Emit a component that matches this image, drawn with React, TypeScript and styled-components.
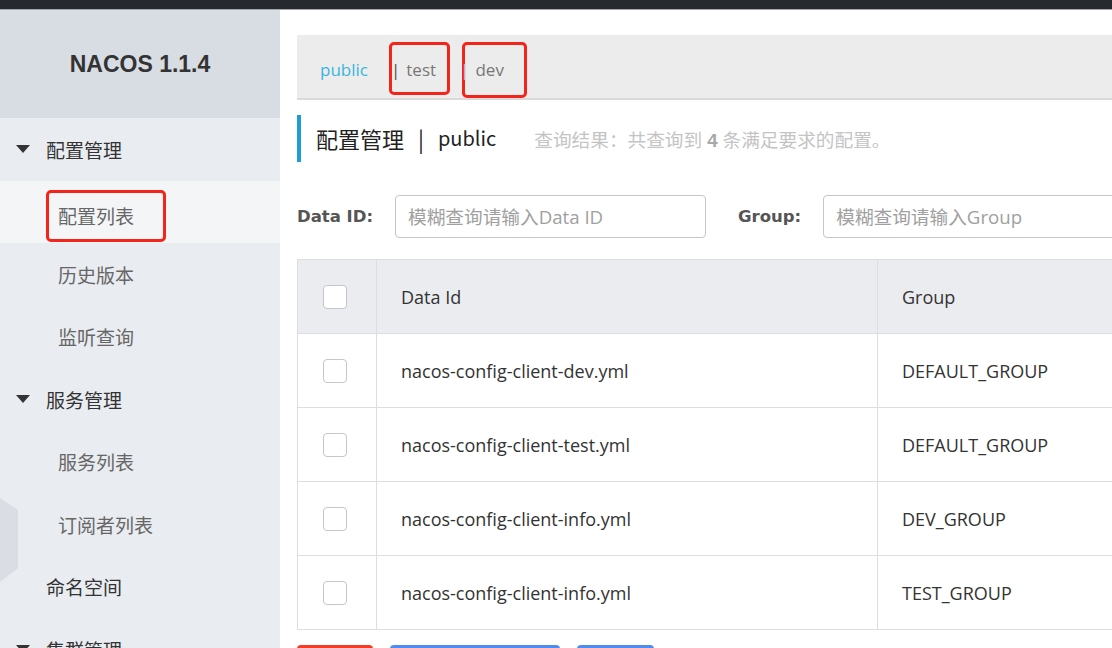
import React from 'react';
import styled, { createGlobalStyle } from 'styled-components';

const GlobalStyle = createGlobalStyle`
  html, body { margin: 0; padding: 0; background: #fff; overflow: hidden; }
  body { font-family: "Open Sans", "Noto Sans CJK SC", sans-serif; color: #333; }
  * { box-sizing: border-box; }
`;

const Page = styled.div`
  width: 1112px;
  height: 648px;
  display: flex;
  flex-direction: column;
  overflow: hidden;
`;

const TopBar = styled.div`
  height: 10px;
  flex-shrink: 0;
  background: #262a2f;
  border-bottom: 1px solid #a3a6aa;
`;

const Body = styled.div`
  flex: 1;
  display: flex;
  min-height: 0;
`;

const Sidebar = styled.aside`
  width: 280px;
  flex-shrink: 0;
  background: #e9ecf0;
  position: relative;
  overflow: hidden;
  display: flex;
  flex-direction: column;
`;

const Brand = styled.div`
  height: 108px;
  flex-shrink: 0;
  background: #d8dce3;
  display: flex;
  align-items: center;
  justify-content: center;
  font-family: "Liberation Sans", Arial, sans-serif;
  font-weight: 700;
  font-size: 23px;
  color: #333;
`;

const Menu = styled.nav`
  display: flex;
  flex-direction: column;
  position: relative;
  z-index: 1;
`;

const MenuRow = styled.div<{ $level: 'group' | 'leaf' | 'top'; $active?: boolean }>`
  height: 62.5px;
  flex-shrink: 0;
  display: flex;
  align-items: center;
  gap: 16px;
  padding-left: ${(p) => (p.$level === 'group' ? '16px' : p.$level === 'top' ? '46px' : '58px')};
  font-family: "Noto Sans CJK SC", sans-serif;
  font-size: 19px;
  color: ${(p) => (p.$level === 'leaf' ? '#666' : '#333')};
  background: ${(p) => (p.$active ? '#f4f5f7' : 'transparent')};
`;

const MarkedLeaf = styled.span`
  display: inline-flex;
  align-items: center;
  width: 120px;
  height: 52px;
  margin-left: -12px;
  margin-top: 8px;
  padding-left: 9px;
  border: 3px solid #f4241a;
  border-radius: 5px;
`;

const Caret = styled.svg`
  width: 14px;
  height: 8px;
  flex-shrink: 0;
`;

const HexDeco = styled.svg`
  position: absolute;
  left: 0;
  top: 488px;
  width: 20px;
  height: 84px;
`;

const Main = styled.main`
  flex: 1;
  min-width: 0;
  overflow: hidden;
  background: #fff;
  padding: 25px 0 0 17px;
`;

const Content = styled.div`
  width: 880px;
  flex-shrink: 0;
`;

const NsBar = styled.div`
  height: 65px;
  background: #ececec;
  border-bottom: 2px solid #dadada;
  display: flex;
  align-items: flex-start;
  padding-left: 23px;
  font-size: 17px;
`;

const NsTab = styled.span<{ $active?: boolean }>`
  color: ${(p) => (p.$active ? '#39b6df' : '#777')};
  line-height: 1;
`;

const NsPlain = styled.span`
  height: 63px;
  display: flex;
  align-items: center;
  padding-top: 5px;
  margin-right: 21px;
`;

const NsMarked = styled.span<{ $h: number; $pr: number; $ml: number; $pt: number; $pb: number }>`
  display: flex;
  align-items: center;
  margin-top: 7px;
  margin-left: ${(p) => p.$ml}px;
  height: ${(p) => p.$h}px;
  padding: ${(p) => p.$pt}px ${(p) => p.$pr}px ${(p) => p.$pb}px 0;
  border: 3px solid #f4241a;
  border-radius: 5px;
`;

const NsSep = styled.span<{ $light?: boolean; $shift: number }>`
  color: ${(p) => (p.$light ? '#b9bdc6' : '#5a4a4a')};
  margin-left: ${(p) => p.$shift}px;
  margin-right: 6px;
  line-height: 1;
`;

const TitleRow = styled.div`
  margin-top: 15px;
  height: 47px;
  border-left: 4px solid #1f9bd6;
  padding-left: 15px;
  display: flex;
  align-items: center;
`;

const TitleText = styled.h1`
  margin: 0;
  font-family: "Noto Sans CJK SC", sans-serif;
  font-weight: 400;
  font-size: 22px;
  line-height: 1;
  color: #222;
  display: flex;
  align-items: center;
  padding-bottom: 2px;
`;

const TitleSep = styled.span`
  margin: 0 14px;
`;

const TitleNs = styled.span`
  font-size: 20px;
`;

const ResultText = styled.span`
  margin-left: 38px;
  font-family: "Noto Sans CJK SC", sans-serif;
  font-size: 18.67px;
  color: #c4c4c4;
  b {
    color: #a8a8a8;
    font-family: "Liberation Sans", Arial, sans-serif;
    font-weight: 700;
    margin: 0 5px;
  }
`;

const SearchRow = styled.div`
  margin-top: 33px;
  height: 43px;
  display: flex;
  align-items: center;
`;

const Label = styled.label<{ $ml?: number }>`
  flex-shrink: 0;
  white-space: nowrap;
  font-family: "DejaVu Sans", sans-serif;
  font-weight: 700;
  font-size: 16.5px;
  color: #555;
  margin-left: ${(p) => p.$ml || 0}px;
  margin-right: 22px;
`;

const Input = styled.input<{ $w: number }>`
  width: ${(p) => p.$w}px;
  height: 43px;
  flex-shrink: 0;
  border: 1px solid #c4c6cf;
  border-radius: 4px;
  padding: 0 12px;
  font-family: "Open Sans", "Noto Sans CJK SC", sans-serif;
  font-size: 18.67px;
  color: #333;
  outline: none;
  &::placeholder { color: #a0a0a0; }
`;

const Table = styled.table`
  margin-top: 21px;
  width: 100%;
  border-collapse: collapse;
  table-layout: fixed;
  border: 1px solid #dcdee3;
  font-size: 18px;
  color: #333;
`;

const HeadCell = styled.th<{ $w?: number }>`
  width: ${(p) => (p.$w ? `${p.$w}px` : 'auto')};
  height: 74px;
  background: #ebecf0;
  border: 1px solid #dcdee3;
  text-align: left;
  font-weight: 400;
  padding: 0 0 0 24px;
`;

const Cell = styled.td`
  height: 74px;
  border: 1px solid #dcdee3;
  padding: 0 0 0 24px;
  white-space: nowrap;
`;

const Check = styled.span`
  display: block;
  width: 24px;
  height: 24px;
  margin-left: 1px;
  border: 1px solid #c4c6cf;
  border-radius: 4px;
  background: #fff;
`;

const Actions = styled.div`
  margin-top: 15px;
  display: flex;
  gap: 17px;
`;

const Btn = styled.button<{ $danger?: boolean; $w: number }>`
  width: ${(p) => p.$w}px;
  height: 36px;
  border: none;
  border-radius: 4px;
  background: ${(p) => (p.$danger ? '#f43b25' : '#4f8bf0')};
  color: #fff;
  font-family: "Noto Sans CJK SC", sans-serif;
  font-size: 17px;
`;

const rows = [
  { id: 'nacos-config-client-dev.yml', group: 'DEFAULT_GROUP' },
  { id: 'nacos-config-client-test.yml', group: 'DEFAULT_GROUP' },
  { id: 'nacos-config-client-info.yml', group: 'DEV_GROUP' },
  { id: 'nacos-config-client-info.yml', group: 'TEST_GROUP' },
];

const CaretIcon = () => (
  <Caret viewBox="0 0 14 8">
    <polygon points="0,0 14,0 7,8" fill="#333" />
  </Caret>
);

export default function App() {
  return (
    <Page>
      <GlobalStyle />
      <TopBar />
      <Body>
        <Sidebar>
          <Brand>NACOS 1.1.4</Brand>
          <Menu>
            <MenuRow $level="group"><CaretIcon />配置管理</MenuRow>
            <MenuRow $level="leaf" $active>
              <MarkedLeaf>配置列表</MarkedLeaf>
            </MenuRow>
            <MenuRow $level="leaf">历史版本</MenuRow>
            <MenuRow $level="leaf">监听查询</MenuRow>
            <MenuRow $level="group"><CaretIcon />服务管理</MenuRow>
            <MenuRow $level="leaf">服务列表</MenuRow>
            <MenuRow $level="leaf">订阅者列表</MenuRow>
            <MenuRow $level="top">命名空间</MenuRow>
            <MenuRow $level="group"><CaretIcon />集群管理</MenuRow>
          </Menu>
          <HexDeco viewBox="0 0 20 84">
            <polygon points="0,0 18,12 18,70 0,84" fill="#dadee4" />
          </HexDeco>
        </Sidebar>
        <Main>
          <Content>
            <NsBar>
              <NsPlain><NsTab $active>public</NsTab></NsPlain>
              <NsMarked $h={53} $pr={11} $ml={0} $pt={2} $pb={0}>
                <NsSep $shift={-1}>|</NsSep>
                <NsTab>test</NsTab>
              </NsMarked>
              <NsMarked $h={56} $pr={20} $ml={12} $pt={0} $pb={2}>
                <NsSep $light $shift={-5}>|</NsSep>
                <NsTab>dev</NsTab>
              </NsMarked>
            </NsBar>
            <TitleRow>
              <TitleText>
                配置管理<TitleSep>|</TitleSep><TitleNs>public</TitleNs>
              </TitleText>
              <ResultText>
                查询结果：共查询到<b>4</b>条满足要求的配置。
              </ResultText>
            </TitleRow>
            <SearchRow>
              <Label>Data ID:</Label>
              <Input $w={311} placeholder="模糊查询请输入Data ID" />
              <Label $ml={32}>Group:</Label>
              <Input $w={400} placeholder="模糊查询请输入Group" />
            </SearchRow>
            <Table>
              <thead>
                <tr>
                  <HeadCell $w={79}><Check /></HeadCell>
                  <HeadCell $w={501}>Data Id</HeadCell>
                  <HeadCell>Group</HeadCell>
                </tr>
              </thead>
              <tbody>
                {rows.map((r, i) => (
                  <tr key={i}>
                    <Cell><Check /></Cell>
                    <Cell>{r.id}</Cell>
                    <Cell>{r.group}</Cell>
                  </tr>
                ))}
              </tbody>
            </Table>
            <Actions>
              <Btn $danger $w={76}>删除</Btn>
              <Btn $w={170}>导出选中的配置</Btn>
              <Btn $w={77}>克隆</Btn>
            </Actions>
          </Content>
        </Main>
      </Body>
    </Page>
  );
}
